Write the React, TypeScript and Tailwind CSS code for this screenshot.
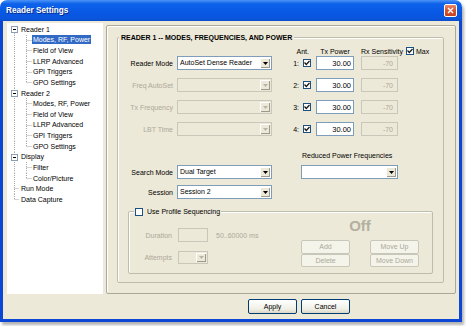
import React from 'react';

type Node = {
  label: string;
  level: 0 | 1;
  box?: boolean;
  root?: 'full' | 'top' | 'bottom';
  last?: boolean;
  selected?: boolean;
};

const tree: Node[] = [
  { label: 'Reader 1', level: 0, box: true, root: 'bottom' },
  { label: 'Modes, RF, Power', level: 1, selected: true },
  { label: 'Field of View', level: 1 },
  { label: 'LLRP Advanced', level: 1 },
  { label: 'GPI Triggers', level: 1 },
  { label: 'GPO Settings', level: 1, last: true },
  { label: 'Reader 2', level: 0, box: true, root: 'full' },
  { label: 'Modes, RF, Power', level: 1 },
  { label: 'Field of View', level: 1 },
  { label: 'LLRP Advanced', level: 1 },
  { label: 'GPI Triggers', level: 1 },
  { label: 'GPO Settings', level: 1, last: true },
  { label: 'Display', level: 0, box: true, root: 'full' },
  { label: 'Filter', level: 1 },
  { label: 'Color/Picture', level: 1, last: true },
  { label: 'Run Mode', level: 0, root: 'full' },
  { label: 'Data Capture', level: 0, root: 'top' },
];

const dot = { stroke: '#a8a8a8', strokeWidth: 1, strokeDasharray: '1 1' };

function TreeRow({ item }: { item: Node }) {
  const h = 10.625;
  const w = item.level === 0 ? 13 : 25;
  const root = item.level === 1 ? 'full' : item.root;
  return (
    <div className="flex h-[10.625px] items-center">
      <svg width={w} height={h} className="shrink-0">
        {root === 'full' && <line x1="7.5" y1="0" x2="7.5" y2={h} {...dot} />}
        {root === 'bottom' && <line x1="7.5" y1={h / 2} x2="7.5" y2={h} {...dot} />}
        {root === 'top' && <line x1="7.5" y1="0" x2="7.5" y2={h / 2} {...dot} />}
        {item.level === 0 && !item.box && <line x1="7.5" y1="5.5" x2="12" y2="5.5" {...dot} />}
        {item.level === 1 && (
          <>
            <line x1="19.5" y1="0" x2="19.5" y2={item.last ? 5.5 : h} {...dot} />
            <line x1="19.5" y1="5.5" x2="25" y2="5.5" {...dot} />
          </>
        )}
        {item.box && (
          <>
            <rect x="4.5" y="2.5" width="6" height="6" fill="#fff" stroke="#8a9eb8" />
            <line x1="6" y1="5.5" x2="9" y2="5.5" stroke="#000" />
          </>
        )}
      </svg>
      <span
        className={`whitespace-nowrap px-[1px] leading-[9px] ${
          item.selected ? 'bg-[#316ac5] text-white' : 'text-black'
        }`}
      >
        {item.label}
      </span>
    </div>
  );
}

function Arrow({ disabled }: { disabled?: boolean }) {
  return (
    <span className="m-[1px] flex w-[10px] shrink-0 items-center justify-center bg-[#ece9d8] shadow-[inset_1px_1px_0_#fff,inset_-1px_-1px_0_#9d9a8c]">
      <svg width="5" height="3">
        <path d="M0 0h5L2.5 3z" fill={disabled ? '#b8b5a6' : '#000'} />
      </svg>
    </span>
  );
}

function Select({ value = '', disabled = false, w }: { value?: string; disabled?: boolean; w: string }) {
  return (
    <div
      className={`flex h-[14px] border ${w} ${
        disabled ? 'border-[#c9c7ba] bg-[#ece9d8]' : 'border-[#7f9db9] bg-white'
      }`}
    >
      <span className="flex-1 truncate pl-[2px] leading-[12px]">{value}</span>
      <Arrow disabled={disabled} />
    </div>
  );
}

function Check({ checked }: { checked?: boolean }) {
  return (
    <span className="flex h-[8px] w-[8px] shrink-0 items-center justify-center border border-[#1c5180] bg-white">
      {checked && (
        <svg width="6" height="6">
          <path d="M0.5 2.5L2.3 4.5L5.5 1" fill="none" stroke="#1a1a1a" strokeWidth="1.3" />
        </svg>
      )}
    </span>
  );
}

function Label({ text, disabled, w }: { text: string; disabled?: boolean; w: string }) {
  return <span className={`${w} text-right ${disabled ? 'text-[#aca899]' : 'text-black'}`}>{text}</span>;
}

function DisabledButton({ text }: { text: string }) {
  return (
    <div className="flex h-[13.5px] w-[49px] items-center justify-center rounded-[2px] border border-[#c9c7ba] bg-[#f5f4ea] text-[#aca899]">
      {text}
    </div>
  );
}

function Button({ text, className = '' }: { text: string; className?: string }) {
  return (
    <div
      className={`flex h-[15px] w-[49px] items-center justify-center rounded-[2px] border border-[#003c74] bg-[linear-gradient(to_bottom,#ffffff,#f0efe6_70%,#dcd8c8)] text-black ${className}`}
    >
      {text}
    </div>
  );
}

export default function App() {
  const ants = ['1:', '2:', '3:', '4:'];
  return (
    <div className="h-[326px] w-[466px] bg-white font-['Liberation_Sans',Arial,sans-serif] text-[7px] leading-[9px]">
      <div className="flex h-[322px] w-[462px] flex-col overflow-hidden rounded-t-[7px] shadow-[2px_3px_3px_rgba(0,0,0,0.3)]">
        <div className="flex h-[21px] shrink-0 items-center justify-between bg-[linear-gradient(to_bottom,#4d94f8_0%,#0d62ea_18%,#0858e4_60%,#0a55dc_90%,#0a4dc8_100%)] pl-[6px] pr-[5px]">
          <span className="text-[8.2px] font-bold text-white [text-shadow:1px_1px_0_#0a2a8a]">Reader Settings</span>
          <span className="flex h-[13px] w-[13px] items-center justify-center rounded-[2px] border border-white bg-[linear-gradient(to_bottom,#e98a6a,#d5542e_50%,#c4431e)]">
            <svg width="7" height="7">
              <path d="M1 1L6 6M6 1L1 6" stroke="#fff" strokeWidth="1.4" />
            </svg>
          </span>
        </div>

        <div className="flex flex-1 flex-col border-x-[3px] border-b-[3px] border-[#0b47d4] bg-[#ece9d8]">
          <div className="flex pl-[4px] pt-[2px]">
            <div className="h-[271px] w-[96px] bg-white pt-[1px]">
              {tree.map((item, i) => (
                <TreeRow key={i} item={item} />
              ))}
            </div>

            <div className="ml-[3px] mt-[2px] h-[269px] w-[350px] rounded-[2px] border border-[#aca899] pl-[10px] pt-[11px] shadow-[inset_1px_1px_0_#fff]">
              <div className="relative h-[246px] w-[327px] rounded-[2px] border border-[#c0bcab] shadow-[inset_1px_1px_0_#fff]">
                <span className="absolute -top-[5px] left-[1px] bg-[#ece9d8] px-[2px] font-bold text-black">
                  READER 1 -- MODES, FREQUENCIES, AND POWER
                </span>

                <div className="flex">
                  <div className="flex flex-col gap-[8px] pt-[18px]">
                    <div className="flex h-[14px] items-center">
                      <Label text="Reader Mode" w="w-[55px]" />
                      <div className="ml-[4px]">
                        <Select value="AutoSet Dense Reader" w="w-[95px]" />
                      </div>
                    </div>
                    {['Freq AutoSet', 'Tx Frequency', 'LBT Time'].map((t) => (
                      <div key={t} className="flex h-[14px] items-center">
                        <Label text={t} disabled w="w-[55px]" />
                        <div className="ml-[4px]">
                          <Select disabled w="w-[95px]" />
                        </div>
                      </div>
                    ))}
                  </div>

                  <div className="ml-[18px] flex flex-col pt-[8px]">
                    <div className="flex h-[10px] items-center">
                      <span className="w-[19px] text-right">Ant.</span>
                      <span className="ml-[7px] w-[38px] text-center">Tx Power</span>
                      <span className="ml-[7px]">Rx Sensitivity</span>
                      <span className="ml-[3px]">
                        <Check checked />
                      </span>
                      <span className="ml-[2px]">Max</span>
                    </div>
                    <div className="flex flex-col gap-[8px]">
                      {ants.map((a) => (
                        <div key={a} className="flex h-[14px] items-center">
                          <span className="w-[9px] text-right">{a}</span>
                          <span className="ml-[4px]">
                            <Check checked />
                          </span>
                          <span className="ml-[5px] flex h-[14px] w-[38px] items-center justify-end border border-[#7f9db9] bg-white pr-[2px] text-[7.5px]">
                            30.00
                          </span>
                          <span className="ml-[7px] flex h-[14px] w-[37px] items-center justify-end border border-[#c9c7ba] bg-[#ece9d8] pr-[4px] text-[#aca899]">
                            -70
                          </span>
                        </div>
                      ))}
                    </div>
                  </div>
                </div>

                <div className="mt-[15px] flex">
                  <div className="flex flex-col gap-[6px] pt-[14px]">
                    <div className="flex h-[14px] items-center">
                      <Label text="Search Mode" w="w-[55px]" />
                      <div className="ml-[4px]">
                        <Select value="Dual Target" w="w-[95px]" />
                      </div>
                    </div>
                    <div className="flex h-[14px] items-center">
                      <Label text="Session" w="w-[55px]" />
                      <div className="ml-[4px]">
                        <Select value="Session 2" w="w-[95px]" />
                      </div>
                    </div>
                  </div>
                  <div className="ml-[29px] flex flex-col gap-[5px]">
                    <span className="pl-[1px]">Reduced Power Frequencies</span>
                    <Select w="w-[97px]" />
                  </div>
                </div>

                <div className="relative ml-[10px] mt-[12px] flex h-[63px] w-[305px] rounded-[2px] border border-[#c0bcab] shadow-[inset_1px_1px_0_#fff]">
                  <span className="absolute -top-[5px] left-[5px] flex items-center gap-[4px] bg-[#ece9d8] px-[1px]">
                    <Check />
                    <span>Use Profile Sequencing</span>
                  </span>

                  <div className="flex w-[172px] flex-col gap-[9px] pt-[16px]">
                    <div className="flex h-[14px] items-center">
                      <Label text="Duration" disabled w="w-[43px]" />
                      <span className="ml-[6px] h-[14px] w-[30px] border border-[#c9c7ba] bg-[#ece9d8]" />
                      <span className="ml-[8px] text-[#aca899]">50..60000 ms</span>
                    </div>
                    <div className="flex h-[13px] items-center">
                      <Label text="Attempts" disabled w="w-[43px]" />
                      <div className="ml-[6px] flex h-[13px] w-[30px] border border-[#c9c7ba] bg-[#ece9d8]">
                        <span className="flex-1" />
                        <Arrow disabled />
                      </div>
                    </div>
                  </div>

                  <div className="flex w-[118px] flex-col items-center pt-[6px]">
                    <span className="text-[15px] font-bold leading-[15px] text-[#b3b0a1]">Off</span>
                    <div className="mt-[7px] grid grid-cols-2 gap-x-[20px]">
                      <DisabledButton text="Add" />
                      <DisabledButton text="Move Up" />
                      <DisabledButton text="Delete" />
                      <DisabledButton text="Move Down" />
                    </div>
                  </div>
                </div>
              </div>
            </div>
          </div>

          <div className="mt-[5px] flex pl-[245px]">
            <Button text="Apply" />
            <Button text="Cancel" className="ml-[4px]" />
          </div>
        </div>
      </div>
    </div>
  );
}
